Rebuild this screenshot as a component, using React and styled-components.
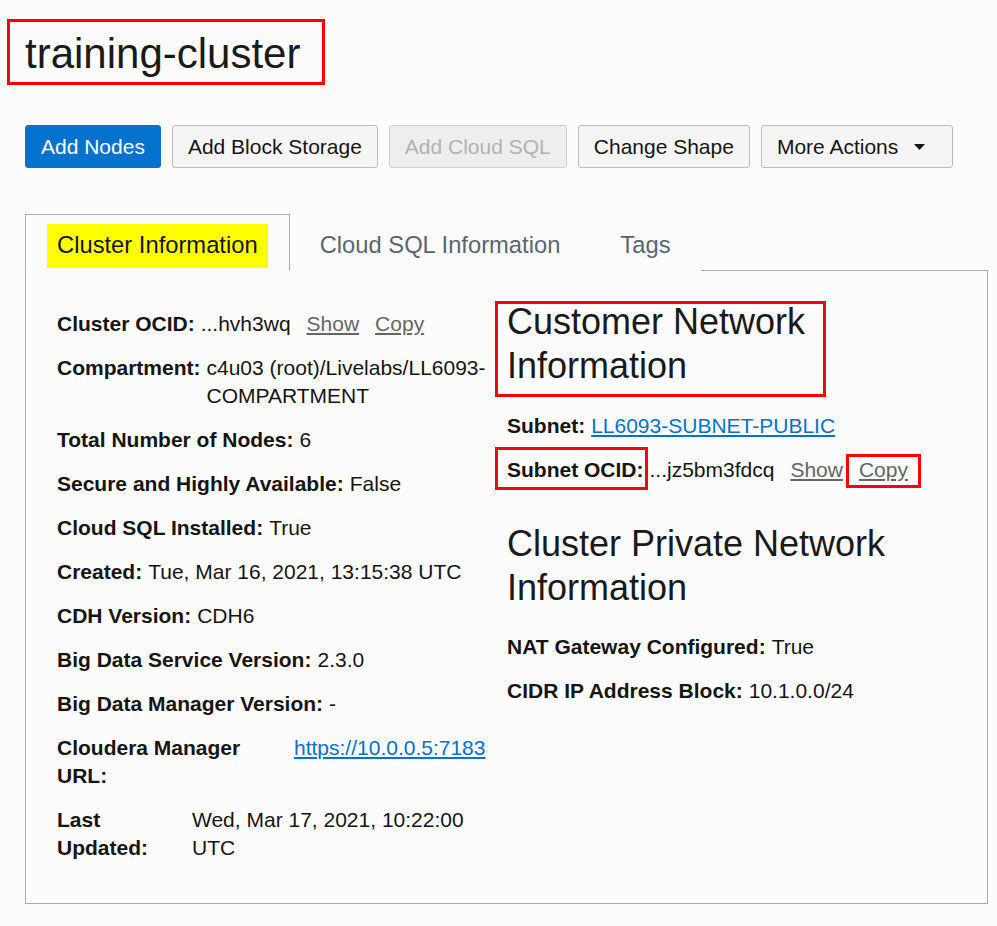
import React from 'react';
import styled, { createGlobalStyle } from 'styled-components';

const GlobalStyle = createGlobalStyle`
  html, body {
    margin: 0;
    padding: 0;
    background: #fcfcfc;
  }
  body {
    font-family: "Liberation Sans", Arial, sans-serif;
    color: #161513;
  }
`;

const Page = styled.div`
  width: 997px;
  min-height: 926px;
  box-sizing: border-box;
  padding: 19px 9px 0 25px;
`;

// red annotation box drawn over the content, does not take part in layout
const Marked = styled.span`
  position: relative;
  display: ${p => (p.$block ? 'block' : 'inline-block')};
  &::after {
    content: '';
    position: absolute;
    inset: ${p => p.$inset};
    border: 3px solid #ff0000;
    pointer-events: none;
  }
`;

const Title = styled.h1`
  margin: 0;
  padding-top: 4px;
  font-size: 42px;
  font-weight: 400;
  line-height: 62px;
  color: #1a1a1a;
`;

const Toolbar = styled.div`
  display: flex;
  gap: 11px;
  margin-top: 40px;
`;

const Button = styled.button`
  display: inline-flex;
  align-items: center;
  height: 43px;
  padding: 0 15px;
  border-radius: 3px;
  font-family: "Liberation Sans", Arial, sans-serif;
  font-size: 21px;
  border: 1px solid ${p => (p.$primary ? '#0572ce' : p.disabled ? '#cfcfcf' : '#b9bcc4')};
  background: ${p => (p.$primary ? '#0572ce' : p.disabled ? '#eeeeee' : '#f5f5f6')};
  color: ${p => (p.$primary ? '#ffffff' : p.disabled ? '#b2b2b2' : '#161513')};
`;

const Caret = styled.svg`
  width: 11px;
  height: 6px;
  margin: 0 12px 0 16px;
  fill: #161513;
`;

const TabBar = styled.div`
  display: flex;
  align-items: flex-end;
  margin-top: 46px;
  margin-bottom: -1px;
  position: relative;
  z-index: 1;
`;

const Tab = styled.div`
  padding: 9px ${p => (p.$active ? 21 : 19)}px 2px;
  border: 1px solid ${p => (p.$active ? '#aaaaaa' : 'transparent')};
  border-bottom-color: ${p => (p.$active ? '#fcfcfc' : 'transparent')};
  background: #fcfcfc;
  font-size: 23.75px;
  line-height: 41px;
  color: ${p => (p.$active ? '#161513' : '#5b6571')};
`;

const TabLabel = styled.span`
  display: inline-block;
  padding: 0 10px 3px;
  background: ${p => (p.$highlight ? '#ffff00' : 'transparent')};
`;

const Panel = styled.div`
  display: grid;
  grid-template-columns: 431px 1fr;
  column-gap: 19px;
  border: 1px solid #aaaaaa;
  padding: 29px 30px 25px 31px;
`;

const LeftColumn = styled.div`
  padding-top: 10px;
`;

const RightColumn = styled.div``;

const Row = styled.div`
  display: flex;
  gap: 6px;
  margin-bottom: 16px;
  font-size: 21px;
  line-height: 28px;
`;

const Label = styled.span`
  flex: none;
  font-weight: 700;
  width: ${p => (p.$width ? `${p.$width}px` : 'auto')};
`;

const Value = styled.span`
  flex: 1 1 auto;
  min-width: 0;
`;

const Action = styled.a`
  color: #666666;
  text-decoration: underline;
  margin-left: ${p => (p.$flush ? 0 : 16)}px;
`;

const BlueLink = styled.a`
  color: #0572ce;
  text-decoration: underline;
`;

const SectionTitle = styled.h2`
  margin: ${p => (p.$first ? '0 0 24px' : '38px 0 23px')};
  font-size: 36px;
  font-weight: 400;
  line-height: 44px;
  color: #1a1a1a;
`;

const CopyMark = styled(Marked)`
  margin-left: 16px;
`;

const clusterRows = [
  ['Total Number of Nodes:', '6'],
  ['Secure and Highly Available:', 'False'],
  ['Cloud SQL Installed:', 'True'],
  ['Created:', 'Tue, Mar 16, 2021, 13:15:38 UTC'],
  ['CDH Version:', 'CDH6'],
  ['Big Data Service Version:', '2.3.0'],
  ['Big Data Manager Version:', '-'],
];

export default function App() {
  return (
    <>
      <GlobalStyle />
      <Page>
        <Marked $inset="0 -25px 0 -18px">
          <Title>training-cluster</Title>
        </Marked>

        <Toolbar>
          <Button $primary>Add Nodes</Button>
          <Button>Add Block Storage</Button>
          <Button disabled>Add Cloud SQL</Button>
          <Button>Change Shape</Button>
          <Button>
            More Actions
            <Caret viewBox="0 0 11 6">
              <polygon points="0,0 11,0 5.5,6" />
            </Caret>
          </Button>
        </Toolbar>

        <TabBar>
          <Tab $active>
            <TabLabel $highlight>Cluster Information</TabLabel>
          </Tab>
          <Tab>
            <TabLabel>Cloud SQL Information</TabLabel>
          </Tab>
          <Tab>
            <TabLabel>Tags</TabLabel>
          </Tab>
        </TabBar>

        <Panel>
          <LeftColumn>
            <Row>
              <Label>Cluster OCID:</Label>
              <Value>
                ...hvh3wq<Action>Show</Action><Action>Copy</Action>
              </Value>
            </Row>
            <Row>
              <Label>Compartment:</Label>
              <Value>c4u03 (root)/Livelabs/LL6093-COMPARTMENT</Value>
            </Row>
            {clusterRows.map(([label, value]) => (
              <Row key={label}>
                <Label>{label}</Label>
                <Value>{value}</Value>
              </Row>
            ))}
            <Row>
              <Label $width={231}>Cloudera Manager URL:</Label>
              <Value>
                <BlueLink>https://10.0.0.5:7183</BlueLink>
              </Value>
            </Row>
            <Row>
              <Label $width={129}>Last Updated:</Label>
              <Value>Wed, Mar 17, 2021, 10:22:00 UTC</Value>
            </Row>
          </LeftColumn>

          <RightColumn>
            <Marked $block $inset="1px 131px -9px -12px">
              <SectionTitle $first>Customer Network Information</SectionTitle>
            </Marked>
            <Row>
              <Label>Subnet:</Label>
              <Value>
                <BlueLink>LL6093-SUBNET-PUBLIC</BlueLink>
              </Value>
            </Row>
            <Row>
              <Label>
                <Marked $inset="-9px -4px -6px -12px">Subnet OCID:</Marked>
              </Label>
              <Value>
                ...jz5bm3fdcq<Action>Show</Action>
                <CopyMark $inset="-2px -13px -4px -13px">
                  <Action $flush>Copy</Action>
                </CopyMark>
              </Value>
            </Row>
            <SectionTitle>Cluster Private Network Information</SectionTitle>
            <Row>
              <Label>NAT Gateway Configured:</Label>
              <Value>True</Value>
            </Row>
            <Row>
              <Label>CIDR IP Address Block:</Label>
              <Value>10.1.0.0/24</Value>
            </Row>
          </RightColumn>
        </Panel>
      </Page>
    </>
  );
}
